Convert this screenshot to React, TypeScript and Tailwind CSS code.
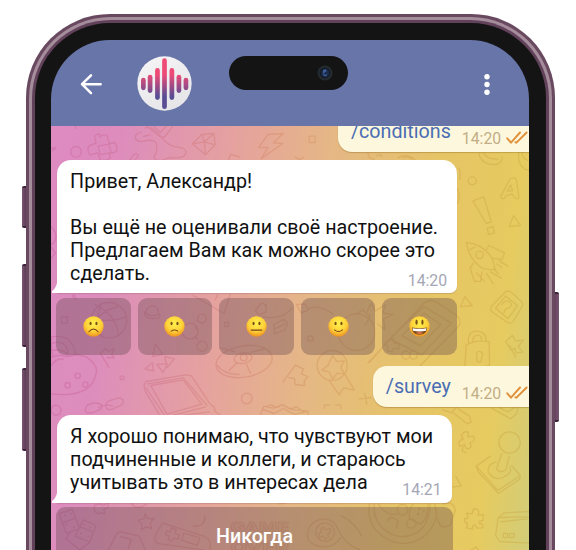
import React from "react";

function Wallpaper() {
  return (
    <svg
      className="absolute inset-0 h-full w-full"
      viewBox="4 16.5 1433 1273.5"
      preserveAspectRatio="none"
      fill="none"
      strokeWidth="4"
      strokeLinejoin="round"
      strokeLinecap="round"
    >
      <defs>
        <linearGradient id="ink" gradientUnits="userSpaceOnUse" x1="0" y1="0" x2="1437" y2="0">
          <stop offset="0" stopColor="#c45a9a" />
          <stop offset="0.35" stopColor="#cf766c" />
          <stop offset="0.6" stopColor="#cf9150" />
          <stop offset="1" stopColor="#c8a63c" />
        </linearGradient>
      </defs>
      <g stroke="url(#ink)" opacity="0.38">
        {/* left top: ring, game pad cross, dice */}
        <circle cx="79" cy="94" r="16" />
        <path d="M5 82l14 4M8 92l8-12M76 16l3 8M150 50q10-10 22-5l7 26 14-5q8 0 9 22-1 8-24 11l4 10q-5 14-30 10l-8-22-22 6q-8-2-7-22 4-9 24-12l-4-20q2-8 15-9zM145 77l32-6M152 103l27-6M145 77l7 26M177 71l8 26" />
        <path d="M290 16l40 32q10 7 18-3l22-29M310 16l22 20 18-20M275 35q-25 6-16 22 9 10 32 3 28-4 30 14 2 22-8 34 0 14 24 12 20-12 44-8 26 0 28-17-2-12-24-15-30-2-50-30-28-38-49-27M281 48l20-5M240 118l14-17q8-4 12 3l-10 14" />
        <path d="M428 70l28-28 37-3 3 34-29 30zM428 70l36-6 32 9M456 42l8 22 29-25M464 64l3 39" />
        <path d="M654 42l46-3-29 28 28 2-66 46 22-34-28 0zM778 47h18v19h-18zM736 109l13 9 12-7M536 117l7-16 27 9" />
        {/* right column */}
        <path d="M955 97q-2 15 18 20M980 107q10-9 16 1M1045 112q25-15 50 5M1060 112q13-8 25 4M1287 98q6 36 52 34 20-7 18-23M1302 98q10 20 43 18M1407 96q-6 34 18 50l12 4M1416 96q0 16 18 24" />
        <circle cx="1267" cy="181" r="12" />
        <path d="M1226 142q8 12 3 35M1223 205q10 24 0 43M1381 174q16-6 19 6l7 49q-2 11-11 3l-10-12-18 6-5 8q-11 3-10-7zM1382 193l-9 19 15-2zM1269 241l33-12 22 75-15 5zM1312 323l17-5 5 19-18 5zM1391 285l21 30-34 3z" />
        <path d="M1249 366q53 5 78 48l10 35-35-4q-42-21-53-79zM1308 390l9-15 47 22-8 20-30-4M1270 428l-9 15 13 40 18-1 4-28M1256 390l18-10M1348 421l26 16M1340 430l16 12M1331 442l13 17M1322 454l33 19M1310 459l20 31M1280 457l23 25" />
        <circle cx="1289" cy="403" r="11" />
        <path d="M1368 513q8-4 16 2l31 28q6 8 1 16l-25 42q-8 10-18 5l-44-30q-10-8-5-18zM1367 527l36 28-29 39-37-31zM1356 553q8-18 24-9 11 13-6 20-10 0-11 11M1359 580l3 3M1245 528l22 27-35 4z" />
        <path d="M1249 674q25-17 69-10l1 70q-40 18-74 4zM1256 666q-5-34 28-34 24 2 25 30M1269 661q0-17 16-17 10 1 10 15M1280 696q12-8 18 4l-5 24-11 0zM1367 664l21-20 8 17 24-2-15 19 14 17-21 2-2-14-12 6zM1379 675l18 35" />
        {/* behind the reply buttons */}
        <path d="M35 590l18-2 1 20-18 1zM67 526l12 10-5-13zM430 525l93 54 18-57M503 522l-6 16M136 552q65 31 71 94M204 558q-70 18-76 76M123 595q60 12 107-6M155 548q-28 70 6 101" />
        <circle cx="178" cy="599" r="53" />
        <path d="M290 567q18-22 36 0l0 14q-22 12-38-4zM284 575q0 24 42 18 10-10 0-14M441 600l16 9M437 621l8 11M436 648l9 10" />
        <circle cx="421" cy="632" r="24" /><circle cx="457" cy="594" r="13" /><circle cx="457" cy="677" r="15" />
        <path d="M525 606h12v12h-12zM617 570l18-22 14 5 0 22-22 8zM640 590q58 8 88-28M672 612l30-16 12 12-9 20-30 12zM675 625l29-14M740 552l26-1 10 17-22 9zM776 565q30-15 74 16M774 647h15v14h-15z" />
        <circle cx="920" cy="635" r="55" />
        <path d="M917 582l22-14 22 20-15 26M953 572l11-25 12 24 32-18-9 24 30 5-28 13 4 32-22-17M954 728l170-182q20-14 45 5l48 31q18 14 12 32l-118 122M1122 558l82 50-88 95-96-48zM1122 578l50 34-60 64-55-30zM1014 660l15-5 5 13 14 3-2 14-15-2-5 11-14-4 2-13-11-6zM990 690l-30 35" />
        <circle cx="1068" cy="704" r="12" /><circle cx="1091" cy="704" r="12" />
        {/* middle band */}
        <path d="M5 650q60-14 73 50M5 670q45-16 50 30M5 690q36-6 50 14M5 710l25-6 22 4 30-6 28 7q35 25 30 45-5 36-34 54-40 20-101 12M5 734q15-22 36-18M5 648q-2 30 5 60" />
        <circle cx="84" cy="766" r="8" /><circle cx="54" cy="794" r="8" /><circle cx="107" cy="792" r="8" /><circle cx="217" cy="772" r="6" />
        <path d="M152 698l16-14 8 8 18-7-8 17 8 10-22-1M152 698l25 42M317 670l22 31-30 7zM345 708l29 7-22 26zM286 745l22-19 3 26zM322 732l31-2-13 26z" />
        <circle cx="19" cy="869" r="15" />
        <path d="M114 853q25-11 42 0 4 12-12 17-20 11-33 6-10-8 3-23zM176 842l27-9q18-2 18 11 0 10-20 16-20 12-30 4-7-12 5-22zM146 861q23-12 43-4" />
        <path d="M283 793l6-10 118-20 18 3 57 86 11 7 3 14 20 15M283 793l4 20 46 76M303 795l97-17 56 73-104 30zM294 790l107-18 70 82M290 804l58 86 120-31M359 890l120-16" />
        <ellipse cx="583" cy="723" rx="85" ry="47" transform="rotate(-10 583 723)" />
        <ellipse cx="580" cy="713" rx="27" ry="16" transform="rotate(-10 580 713)" /><circle cx="582" cy="711" r="10" />
        <path d="M555 694l-43-12M605 695l42-10M590 732l12 26M560 728l-22 22M503 735q20 27 65 27" />
        <circle cx="591" cy="834" r="16" />
        <path d="M737 734l-38 51M737 734l24 12-6 14 19 8-11 14 2 13-29-3-2-18-17-2" />
        <path d="M848 705l13 18 22-2-10 20 11 20-22-3-14 19-9-22-23-6 19-15zM837 779l31 44 13-21 33 7-31-51" />
        <circle cx="847" cy="735" r="45" />
        <path d="M945 819l6 32M929 835l34-4M824 864v-10h16M857 854h16v10M632 883l10-26 29 6 25-9 37 14 42 3-2 20M640 867l33 12 27-15 34 17 35-7M652 857q10-8 20 0t18-1 20 3 20 4 20 3 19 6" />
        {/* lower right */}
        <path d="M1177 868l28 8 15-15M1210 877l42 33 12-5-5-18-33-21M1325 863l58 32 18-17 3-18M1350 862l24 12 20-13M1238 940q5-9 17-5l0 15 13-4q10 8 2 17l-10 4q8 13-3 17-10 4-13-12l-13 6q-10-10 0-18l9-5q-9-9-2-15zM1240 980q-8 15 8 16" />
        <circle cx="1379" cy="966" r="32" />
        <path d="M1355 1000l-15 45q10 16 28 3l10-40M1322 1007l-43 30 65 73 67-45-26-30M1279 1037l6 17 61 65 64-44 1-11M1339 1025q-27 4-24 30 16 27 45 16 30-15 20-32M1218 1068l16 28-28 4" />
        <path d="M1250 1178l17 2 3-14q15-3 17 9l-3 9 16-2 0 18q-14 0-11 9 14 0 9 13l-17 1-5-10q-10 0-8 13l-18-4 3-15q-11 3-8-14 10 4 9-5zM1337 1245l8-54 18-14 74-4M1345 1191l92-2M1352 1204l80-9M1337 1245l12 18 88 5M1360 1239h13v12h-13zM1379 1239h14v12h-14zM1263 1289l16-10 8 11" />
        {/* bottom strip */}
        <path d="M28 1179l40-12 22 58-40 13zM36 1207l42-14M101 1198l38 17-19 50-44-19zM91 1219l38 15M60 1236l-12 19 42 33 30-22M134 1155l15-5 12 5 16-9-3 16-11 4 2 14-13-4-5 5-12-8zM245 1149q17 23 45 2M286 1179l9 16 18-1-12 14 5 16-18-5-13 9 1-18-11-11 18-4zM176 1288l25-48q5-8 17-5l50 12 20 43M213 1248l32 9-9 26M340 1208l120 38q28 10 20 44M340 1208q-12 14-25 42 0 20 18 20l130 19M365 1222l14 5-3 12 13 5-4 12-14-4-4 10-12-5 3-11-11-4 4-11 11 4zM402 1238l48 14-7 23-47-16zM430 1217q37 3 35-30" />
        <path d="M775 1232q9-34 46-37 34 2 45 34 20 43 65 60M775 1232q-10 31 24 43 48 15 73-23M875 1186q40 20 60 60M959 1150q-8 45 19 79 45 48 99 38 64-12 84-81l-6-36M973 1150q-4 42 24 72 47 42 96 18 43-16 48-90M985 1150q22 35 56 32M1090 1150q-18 25-10 45l31 16q25-15 23-61M1011 1200l15-10 18 10-4 22M1180 1150q32-10 36 21l-15 43q-33 16-36-18" />
        <circle cx="826" cy="1235" r="28" /><circle cx="1058" cy="1168" r="16" /><circle cx="1085" cy="1209" r="14" />
        <path d="M812 1227l9-7 7 9 12-5 2 12-9 5 4 9-11 5-7-9-10 5-2-12 8-4zM537 1146l30-2M688 1150l22-3" />
        <g fill="url(#ink)" stroke="none">
          <circle cx="46" cy="1185" r="3" /><circle cx="64" cy="1180" r="3" /><circle cx="50" cy="1211" r="3" /><circle cx="72" cy="1221" r="3" />
          <circle cx="104" cy="1211" r="3" /><circle cx="122" cy="1220" r="3" /><circle cx="94" cy="1238" r="3" /><circle cx="116" cy="1248" r="3" />
          <circle cx="1108" cy="1165" r="4" /><circle cx="1122" cy="1170" r="4" /><circle cx="1105" cy="1180" r="4" />
        </g>
        <text x="542" y="1234" fontSize="40" strokeWidth="3" textLength="176" lengthAdjust="spacingAndGlyphs" className="font-['Inter',sans-serif] font-bold">GAME</text>
        <text x="542" y="1296" fontSize="40" strokeWidth="3" textLength="176" lengthAdjust="spacingAndGlyphs" className="font-['Inter',sans-serif] font-bold">OVER</text>
        <path d="M5 320q14 12 14 30-2 15-14 22M5 380l12 18-12 15" />
      </g>
    </svg>
  );
}

type Mood = "sad" | "frown" | "neutral" | "smile" | "grin";

function Face({ mood }: { mood: Mood }) {
  const eyeY = mood === "grin" ? 19 : 23;
  return (
    <svg className="h-[21px] w-[21px]" viewBox="0 0 64 64" fill="none">
      <defs>
        <radialGradient id={`skin-${mood}`} cx="0.5" cy="0.35" r="0.66">
          <stop offset="0" stopColor="#fff04d" />
          <stop offset="0.6" stopColor="#fdd139" />
          <stop offset="1" stopColor="#ee8f1f" />
        </radialGradient>
      </defs>
      <circle cx="32" cy="32" r="31" fill={`url(#skin-${mood})`} />
      <g fill="#7a5218">
        <ellipse cx="23" cy={eyeY} rx="3.4" ry={mood === "grin" ? 8 : 5.2} />
        <ellipse cx="41" cy={eyeY} rx="3.4" ry={mood === "grin" ? 8 : 5.2} />
      </g>
      {mood === "sad" && <path d="M18 48q14-17 28 0" stroke="#7a4618" strokeWidth="3.2" strokeLinecap="round" />}
      {mood === "frown" && <path d="M22 46q10-7 20 0" stroke="#7a4618" strokeWidth="3.2" strokeLinecap="round" />}
      {mood === "neutral" && <path d="M16 43h32" stroke="#7a4618" strokeWidth="3.6" strokeLinecap="round" />}
      {mood === "smile" && <path d="M20 42q12 10 24 0" stroke="#7a4618" strokeWidth="3.2" strokeLinecap="round" />}
      {mood === "grin" && (
        <>
          <path d="M9 35q23 5 46 0 0 21-23 22Q9 56 9 35z" fill="#7c4a1a" />
          <path d="M11 37q21 4 42 0l-1 8q-20 4-40 0z" fill="#fff" />
          <path d="M20 52q12-6 24 0-12 7-24 0z" fill="#d9714a" />
        </>
      )}
    </svg>
  );
}

function Ticks() {
  return (
    <svg className="h-[14px] w-[22px]" viewBox="0 0 22 14" fill="none" stroke="#e0913a" strokeWidth="1.9" strokeLinecap="round">
      <path d="M1.2 7.3L5 11.6 14 1.5M9.4 11.3l1 .4L20.6 1.5" />
    </svg>
  );
}

function Outgoing({ children }: { children: React.ReactNode }) {
  return (
    <div className="flex h-[40.5px] items-end justify-end self-end rounded-l-[14px] bg-[#fdf8dd] shadow-[0_1px_1px_rgba(150,110,40,0.45)]">
      <span className="mr-[11px] ml-[13px] pb-[9px] text-[19.7px] leading-[23px] text-[#4a6db4]">{children}</span>
      <span className="mr-[5px] pb-[3px] text-[15.8px] leading-[20px] text-[#c2ad86]">14:20</span>
      <span className="mr-px pb-[7px]"><Ticks /></span>
    </div>
  );
}

function Incoming({ children, time, className }: { children: React.ReactNode; time: string; className: string }) {
  return (
    <div className={`relative ml-[5.3px] flex items-end justify-between rounded-t-[14px] rounded-br-[7px] bg-white pl-[13.5px] text-[19.72px] leading-[23.15px] text-[#111] shadow-[0_1px_1px_rgba(120,80,90,0.25)] ${className}`}>
      <svg className="absolute bottom-0 -left-[5px] h-[16px] w-[6px]" viewBox="0 0 6 16"><path d="M5 0v6q-1 5-5 8v2h6V0z" fill="#fff" /></svg>
      <div className="whitespace-pre">{children}</div>
      <span className="absolute right-[10px] bottom-[2.5px] text-[15.8px] leading-[20px] text-[#a5a6b5]">{time}</span>
    </div>
  );
}

function Header() {
  const bars = [[41, 89, 118], [61, 80, 126], [83, 60, 147], [104, 31, 174], [126, 60, 147], [147, 80, 126], [168, 89, 118]];
  return (
    <header className="relative z-10 flex h-[86px] shrink-0 items-start bg-[#6875a9]">
      <svg className="mt-[33px] ml-[28.7px] h-[23px] w-[23px]" viewBox="0 0 23 23" fill="none" stroke="#fff" strokeWidth="2.5" strokeLinecap="round" strokeLinejoin="round">
        <path d="M11 2.3L2 11.2l9 8.9M2 11.2h18.6" />
      </svg>
      <svg className="mt-[16.6px] ml-[34px] h-[55px] w-[55px]" viewBox="22 20 164 164">
        <defs>
          <linearGradient id="wave" gradientUnits="userSpaceOnUse" x1="0" y1="75" x2="0" y2="140">
            <stop offset="0" stopColor="#ee4a76" />
            <stop offset="1" stopColor="#5a4c94" />
          </linearGradient>
          <linearGradient id="disc" x1="0" y1="0" x2="0.6" y2="1">
            <stop offset="0" stopColor="#f6f6f7" />
            <stop offset="1" stopColor="#e6e6e9" />
          </linearGradient>
        </defs>
        <circle cx="104" cy="102" r="81" fill="url(#disc)" />
        {bars.map(([x, top, bottom]) => (
          <rect key={x} x={x - 7} y={top - 4} width="14" height={bottom - top + 8} rx="7" fill="url(#wave)" />
        ))}
      </svg>
      <div className="mt-[16px] ml-[36.6px] flex h-[34px] w-[119px] items-center justify-end rounded-full bg-[#141414] pr-[14.5px]">
        <svg className="h-[16px] w-[16px]" viewBox="0 0 16 16">
          <circle cx="8" cy="8" r="7.5" fill="#252c31" />
          <circle cx="8" cy="8" r="5.4" fill="#141b25" />
          <circle cx="8.2" cy="8" r="3.9" fill="#1d2c48" />
          <path d="M6 5l3-.8.5 2L7.5 8l2.5 1-1 2.5-2.5-1z" fill="#3c5f9c" />
          <circle cx="8.3" cy="8.6" r="1.1" fill="#14233e" />
        </svg>
      </div>
      <svg className="mt-[33.5px] mr-[38.7px] ml-auto h-[23px] w-[8px]" viewBox="0 0 8 23" fill="#fff">
        <circle cx="4" cy="3.8" r="2.7" /><circle cx="4" cy="11.5" r="2.7" /><circle cx="4" cy="19.2" r="2.7" />
      </svg>
    </header>
  );
}

const moods: Mood[] = ["sad", "frown", "neutral", "smile", "grin"];

export default function App() {
  return (
    <div className="relative h-[550px] w-[576px] overflow-hidden bg-white pt-[14px] pl-[26px] font-['Roboto',sans-serif]">
      <i className="absolute top-[186px] left-[21.5px] h-[42px] w-[6px] rounded-l-[2px] border-y-2 border-[#3b2439] bg-linear-to-r from-[#7a5672] to-[#4c2f48]" />
      <i className="absolute top-[264px] left-[21.5px] h-[83px] w-[6px] rounded-l-[2px] border-y-2 border-[#3b2439] bg-linear-to-r from-[#7a5672] to-[#4c2f48]" />
      <i className="absolute top-[368px] left-[21.5px] h-[83px] w-[6px] rounded-l-[2px] border-y-2 border-[#3b2439] bg-linear-to-r from-[#7a5672] to-[#4c2f48]" />
      <i className="absolute top-[292px] left-[553px] h-[130px] w-[6px] rounded-r-[2px] border-y-2 border-[#3b2439] bg-linear-to-r from-[#5a3853] to-[#7a5672]" />

      <div className="relative h-[640px] w-[528.5px] rounded-[84px] bg-[#69495f] p-[2.5px]">
        <div className="h-full rounded-[81.5px] bg-[#a58d9c] p-[3px]">
          <div className="h-full rounded-[78.5px] bg-[#62425b] p-[3.5px]">
            <div className="h-full rounded-[75px] bg-[#141414] px-[16.3px] pt-[16.5px]">
              <div className="flex h-[600px] flex-col overflow-hidden rounded-t-[59px]">
                <Header />
                <main className="relative h-[424.5px] overflow-hidden bg-[linear-gradient(97deg,#dd8bc1_0%,#dd8dbc_14%,#e5a29f_35%,#e5b885_54%,#e6c566_75%,#e6cb60_90%,#d2cc78_100%)]">
                  <Wallpaper />
                  <div className="relative -mt-[14.5px] flex flex-col">
                    <Outgoing>/conditions</Outgoing>
                    <Incoming time="14:20" className="mt-[8.5px] h-[133.3px] w-[400.5px] pb-[7.7px]">
                      Привет, Александр!{"\n\n"}Вы ещё не оценивали своё настроение.{"\n"}Предлагаем Вам как можно скорее это{"\n"}сделать.
                    </Incoming>
                    <div className="mt-[4.7px] ml-[4.7px] grid h-[57px] w-[401px] grid-cols-5 gap-[6.7px]">
                      {moods.map((m) => (
                        <button key={m} className="flex items-center justify-center rounded-[9px] bg-[#6a4c52]/38"><Face mood={m} /></button>
                      ))}
                    </div>
                    <div className="mt-[11.5px] flex flex-col"><Outgoing>/survey</Outgoing></div>
                    <Incoming time="14:21" className="mt-[8.3px] h-[87.3px] w-[395px] pb-[8.2px]">
                      Я хорошо понимаю, что чувствуют мои{"\n"}подчиненные и коллеги, и стараюсь{"\n"}учитывать это в интересах дела
                    </Incoming>
                    <button className="mt-[4.5px] ml-[4.7px] flex h-[58.5px] w-[397px] items-center justify-center rounded-[9px] bg-[#6a4c52]/38 text-[19.7px] font-medium text-white">
                      Никогда
                    </button>
                  </div>
                </main>
              </div>
            </div>
          </div>
        </div>
      </div>
    </div>
  );
}
